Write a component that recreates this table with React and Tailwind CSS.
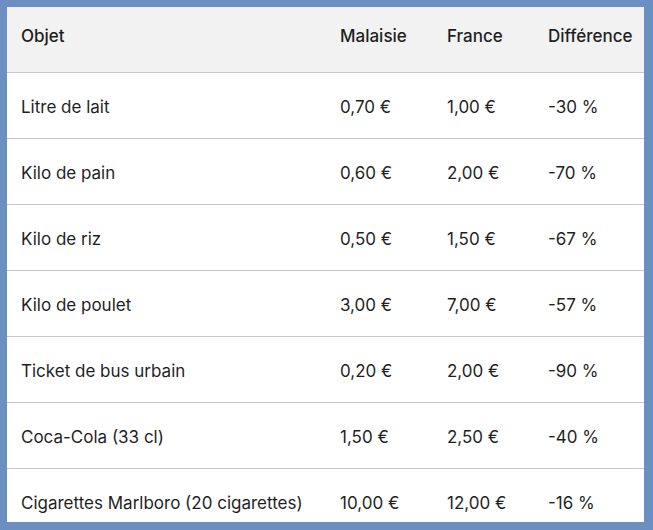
const rows = [
  ["Litre de lait", "0,70 €", "1,00 €", "-30 %"],
  ["Kilo de pain", "0,60 €", "2,00 €", "-70 %"],
  ["Kilo de riz", "0,50 €", "1,50 €", "-67 %"],
  ["Kilo de poulet", "3,00 €", "7,00 €", "-57 %"],
  ["Ticket de bus urbain", "0,20 €", "2,00 €", "-90 %"],
  ["Coca-Cola (33 cl)", "1,50 €", "2,50 €", "-40 %"],
  ["Cigarettes Marlboro (20 cigarettes)", "10,00 €", "12,00 €", "-16 %"],
]

const cols = "grid grid-cols-[319px_107px_101px_110px]"

export default function App() {
  return (
    <div className="w-[653px] h-[530px] bg-[#6b8fc0] pt-[7px] pl-[7px] pr-[9px] pb-[8px] font-['Inter',sans-serif] text-[17px] text-[#1f1f1f]">
      <div className="h-full bg-white overflow-hidden">
        {/* header */}
        <div className={`${cols} h-[66px] pb-[5px] items-center bg-[#f2f2f2] border-b border-[#c7c7c7] font-medium`}>
          <div className="pl-[14px]">Objet</div>
          <div className="pl-[14px]">Malaisie</div>
          <div className="pl-[14px]">France</div>
          <div className="pl-[14px]">Différence</div>
        </div>

        {rows.map((r, i) => (
          <div
            key={i}
            className={`${cols} h-[66px] pt-[4px] items-center border-b border-[#c7c7c7]`}
          >
            {r.map((c, j) => (
              <div key={j} className="pl-[14px]">{c}</div>
            ))}
          </div>
        ))}
      </div>
    </div>
  )
}
